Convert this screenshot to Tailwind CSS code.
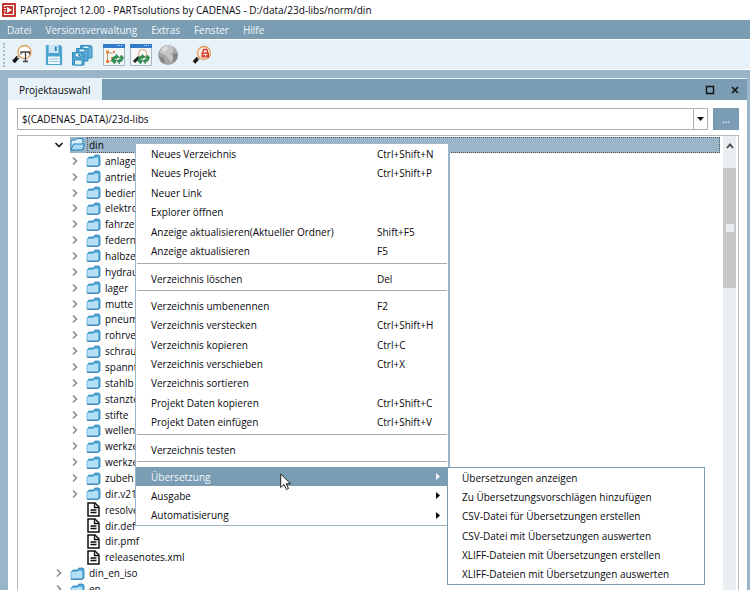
<!DOCTYPE html>
<html lang="de">
 <head>
  <meta charset="utf-8"/>
  <meta content="width=device-width, initial-scale=1" name="viewport"/>
  <title>PARTproject 12.00</title>
  <script src="https://cdn.jsdelivr.net/npm/@tailwindcss/browser@4"></script>
 </head>
 <body class="h-screen flex flex-col overflow-hidden bg-[#9ab5c7] text-[10px] leading-4 text-[#08080f] font-['Open_Sans','Noto_Sans',sans-serif]">

  <!-- shared icons -->
  <svg class="hidden">
   <symbol id="folder" viewBox="0 0 15 14">
    <path d="M1.500 12.500V5L3 3.500H7L9 1.500H13L14 3V11L12.500 12.500Z" fill="#4ea5d3" stroke="#2f86b8" stroke-width=".8"/>
    <path d="M1 5H7L8.500 4H12.500V12.500H1Z" fill="#b5e0f6" stroke="#5fb0db" stroke-width=".8"/>
    <path d="M1 12.700H12.500L14 11" fill="none" stroke="#2878a8"/>
   </symbol>
   <symbol id="folder-open" viewBox="0 0 15 14">
    <path d="M1 12.500V3.500L2 2.500H5.500L7 1H12.500L13 5V11Z" fill="#d9f0fb" stroke="#2580b3"/>
    <path d="M1 12.500L3.500 6.500H14.500L12.500 12.500Z" fill="#a6daf5" stroke="#2580b3"/>
   </symbol>
   <symbol id="file" viewBox="0 0 13 15">
    <path d="M1 1H8L12 5V14H1Z" fill="#fff" stroke="#111" stroke-width="1.500"/>
    <path d="M7.500 1V5.500H12M3.500 8H9.500M3.500 10.500H9.500" fill="none" stroke="#111" stroke-width="1.300"/>
   </symbol>
   <symbol id="closed" viewBox="0 0 10 10">
    <path d="M3 1.500L6.500 5L3 8.500" fill="none" stroke="#8a8a8a" stroke-width="1.500"/>
   </symbol>
   <symbol id="opened" viewBox="0 0 10 10">
    <path d="M1.500 3L5 6.500L8.500 3" fill="none" stroke="#222" stroke-width="1.700"/>
   </symbol>
   <symbol id="refresh" viewBox="0 0 13 10">
    <path d="M1 6C1 3 3 2 5 2V0L8 3L5 5V4C4 4 3.500 5 4 6L6 6L3.500 10L0 6ZM12 4C12 7 10 8 8.500 8V10L6 7L8.500 5V6C9.500 6 10 5 9.500 4H8L10.500 1L13 4Z" fill="#2f9150" stroke="#1d6d39" stroke-width=".4"/>
   </symbol>
  </svg>

  <header class="flex h-5 shrink-0 items-center gap-1 bg-white pl-0.5">
   <svg class="size-[14px]" viewBox="0 0 14 14"><rect width="14" height="14" rx="1" fill="#c5332d"/><path d="M2.500 4V2.500H11.500V11.500H2.500V10" fill="none" stroke="#fff" stroke-width="1.200"/><path d="M5 4L10 7L5 10Z" fill="#fff"/><path d="M2 5.500H4M2 8H4" stroke="#fff"/></svg>
   <h1>PARTproject 12.00 - PARTsolutions by CADENAS - D:/data/23d-libs/norm/din</h1>
  </header>

  <nav class="flex h-5 shrink-0 items-center gap-3.5 border-b border-white bg-[#7b9db4] pl-[7px] text-[#f1f6fa]">
   <button>Datei</button>
   <button>Versionsverwaltung</button>
   <button>Extras</button>
   <button>Fenster</button>
   <button>Hilfe</button>
  </nav>

  <div class="flex h-[30px] shrink-0 items-center border-b border-white bg-[#e6f1f8] pl-[3px]">
   <span class="mr-1 h-6 w-0 border-l-2 border-dotted border-[#a9bdca]"></span>
   <button class="ml-0.5" aria-label="Textsuche"><svg class="h-[22px] w-[22px]" viewBox="0 0 22 22"><path d="M7 13L2.500 18" stroke="#151515" stroke-width="3.500"/><path d="M8.500 12L6.500 14" stroke="#bbb" stroke-width="2"/><circle cx="13.500" cy="8" r="6.500" fill="#fff" stroke="#e39a55" stroke-width="1.300"/><path d="M10 10.500V8H18.500V10.500M14.500 8V17.500M12 17.500H17" fill="none" stroke="#444" stroke-width="1.300"/></svg></button>
   <button class="ml-3" aria-label="Speichern"><svg class="h-[22px] w-[18px]" viewBox="0 0 20 22" preserveAspectRatio="none"><path d="M1 1H17L19 3V21H1Z" fill="#4ba3d0"/><path d="M4 1H15V9H4Z" fill="#c9e7f6"/><path d="M11 2.500H13V7H11Z" fill="#287fae"/><path d="M3.500 12.500H16.500V20H3.500Z" fill="#eef8fd"/><path d="M5 15H15M5 17.500H15" stroke="#8dbfd9"/></svg></button>
   <button class="ml-2" aria-label="Alles speichern"><svg class="h-[22px] w-[22px]" viewBox="0 0 22 22"><g stroke="#318cbb"><path d="M9.500 1.500H20L21 3V14H9.500Z" fill="#67b2d9"/><path d="M12 2H18V5H12Z" fill="#e4f4fb"/><path d="M5.500 4.500H16L17 6V17H5.500Z" fill="#5dacd5"/><path d="M8 5H14V8H8Z" fill="#e4f4fb"/><path d="M1.500 8.500H12L13 10V21H1.500Z" fill="#55a9d4"/><path d="M4 9H10V13H4ZM3.500 16H11V21H3.500Z" fill="#e4f4fb"/></g><path d="M7.500 10H9V12H7.500Z" fill="#287fae"/></svg></button>
   <button class="ml-2.5" aria-label="Struktur aktualisieren"><svg class="h-[22px] w-[22px]" viewBox="0 0 22 22"><path d="M.5 .5H21.500V21.500H.5Z" fill="#f6f7f8" stroke="#a7b7c2"/><path d="M0 0H22V4H0Z" fill="#327bcb"/><path d="M14 1.500H20" stroke="#c7dfef" stroke-dasharray="1 1"/><path d="M4.500 8V18M5 9H10M5 17H9" stroke="#b79b64" fill="none"/><path d="M3 6.500H6V9.500H3ZM3 16H6V19H3ZM8 13H10V15H8ZM10 7H12V9H10Z" fill="#e78343"/><use href="#refresh" x="8" y="10" width="13" height="10"/></svg></button>
   <button class="ml-[5px]" aria-label="Suche aktualisieren"><svg class="h-[22px] w-[22px]" viewBox="0 0 22 22"><path d="M.5 .5H21.500V21.500H.5Z" fill="#f6f7f8" stroke="#a7b7c2"/><path d="M0 0H22V4H0Z" fill="#327bcb"/><path d="M14 1.500H20" stroke="#c7dfef" stroke-dasharray="1 1"/><path d="M9 13L4 18" stroke="#222" stroke-width="3"/><circle cx="12.500" cy="9.500" r="4" fill="#fff" stroke="#d99c67"/><use href="#refresh" x="7" y="10" width="13" height="10"/></svg></button>
   <button class="ml-[5px]" aria-label="Globus"><svg class="h-[22px] w-[22px]" viewBox="0 0 22 22"><circle cx="11" cy="11" r="10" fill="#a5a5a5"/><path d="M4 4L9 1L15 2L17 6L14 10L17 13L14 18L11 14L8 11L3 9Z" fill="#c5c5c5"/><path d="M16 10L21 9L20 15L16 19ZM2 12L7 14L8 20L4 18Z" fill="#858585"/><path d="M5 5L10 2L11 5L7 8Z" fill="#dedede"/></svg></button>
   <button class="ml-3" aria-label="Gesperrte suchen"><svg class="h-[22px] w-[22px]" viewBox="0 0 22 22"><path d="M7 14L3 18.500" stroke="#151515" stroke-width="3.500"/><path d="M9 13L7 15" stroke="#bbb" stroke-width="2"/><circle cx="13" cy="9" r="6.500" fill="#fbeee4" stroke="#e39a55" stroke-width="1.300"/><path d="M12 9V7.500A2 2 0 0 1 16.500 7.500V9" fill="none" stroke="#d53c30" stroke-width="1.300"/><path d="M10.500 8.500H18V13.500H10.500Z" fill="#d53c30"/><path d="M12 10.500H16.500M14.500 10V12.500" stroke="#fbeee4"/></svg></button>
  </div>

  <main class="ml-2 mr-[3px] mt-2 flex min-h-0 flex-1 flex-col border-t border-[#e6f1f8] bg-white">
   <div class="flex h-[21px] shrink-0 items-stretch bg-[#7b9db4]">
    <h2 class="flex items-center bg-[#e6f1f8] px-[11px]">Projektauswahl</h2>
    <button class="ml-auto mr-[15px]" aria-label="Maximieren"><svg class="size-2.5" viewBox="0 0 10 10"><path d="M1.500 1.500H8.500V8.500H1.500Z" fill="none" stroke="#111" stroke-width="1.400"/></svg></button>
    <button class="mr-[7px]" aria-label="Schließen"><svg class="size-2.5" viewBox="0 0 10 10"><path d="M2 2L8 8M8 2L2 8" stroke="#111" stroke-width="1.600"/></svg></button>
   </div>

   <div class="ml-[9px] mr-2 mt-2 flex h-[22px] shrink-0 gap-[5px]">
    <div class="flex flex-1 border border-[#b0b0b0]">
     <input aria-label="Pfad" class="min-w-0 flex-1 pl-1 outline-none" type="text" value="$(CADENAS_DATA)/23d-libs"/>
     <button class="flex w-3.5 items-center justify-center border-l border-[#b0b0b0]" aria-label="Liste öffnen"><svg class="h-1 w-[7px]" viewBox="0 0 7 4"><path d="M0 0H7L3.500 4Z" fill="#111"/></svg></button>
    </div>
    <button class="w-[26px] bg-[#7b9db4] text-white">...</button>
   </div>

   <section class="relative ml-[9px] mr-2 mt-[5px] flex min-h-0 flex-1 border border-b-0 border-[#b8b8b8]">
    <div class="min-w-0 flex-1 overflow-hidden pt-px">
     <ul class="grid h-[460px] auto-rows-fr" id="tree"></ul>
    </div>
    <div class="ml-[3px] mr-0.5 w-[13px] bg-[#e9eff0]">
     <button class="flex h-8 w-full justify-center pt-1.5" aria-label="Nach oben"><svg class="h-2 w-2" viewBox="0 0 8 8"><path d="M1 6L4 2.500L7 6" fill="none" stroke="#444" stroke-width="1.800"/></svg></button>
     <div class="flex h-[120px] items-center justify-center bg-[#c8c8c8]"><span class="size-2 bg-[#e9eff0]"></span></div>
    </div>

    <!-- context menu -->
    <div class="absolute left-[117px] top-[7px] w-[315px] border border-r-2 border-[#9db6c7] bg-white" id="menu"></div>
    <ul class="absolute left-[429px] top-[331px] grid h-[118px] w-[258px] auto-rows-fr items-center border border-[#7b9db4] bg-white pl-3.5">
     <li><button>Übersetzungen anzeigen</button></li>
     <li><button>Zu Übersetzungsvorschlägen hinzufügen</button></li>
     <li><button>CSV-Datei für Übersetzungen erstellen</button></li>
     <li><button>CSV-Datei mit Übersetzungen auswerten</button></li>
     <li><button>XLIFF-Dateien mit Übersetzungen erstellen</button></li>
     <li><button>XLIFF-Dateien mit Übersetzungen auswerten</button></li>
    </ul>
    <svg class="absolute left-[262px] top-[337px] h-[18px] w-3" viewBox="0 0 12 18"><path d="M.7 1V14.500L4 11.500L6.500 16.500L8.500 15.500L6.200 10.700H10.500Z" fill="#fff" stroke="#222"/></svg>
   </section>
  </main>

  <script>
   const folders = [
      "anlage", "antrieb", "bedien", "elektro", "fahrze", "federn", "halbze",
      "hydrau", "lager", "mutte", "pneum", "rohrve", "schrau", "spannt", "stahlb",
      "stanzte", "stifte", "wellen", "werkze", "werkze", "zubeh", "dir.v21",
    ];
    const files = ["resolve", "dir.def", "dir.pmf", "releasenotes.xml"];

    function treeRow(name, indent, icon, arrow) {
      const selected = name === "din";
      return `<li class="flex items-center ${indent}">
        <svg class="mr-1.5 size-2.5 shrink-0">${arrow ? `<use href="#${arrow}"/>` : ""}</svg>
        <div class="flex h-full min-w-0 flex-1 items-center gap-0.5 ${selected ? "bg-[#9ab5c7]" : ""}">
          <svg class="h-[15px] w-[15px] shrink-0"><use href="#${icon}"/></svg>
          <span class="flex h-full items-center pl-px ${selected ? "flex-1 border border-dotted border-[#555]" : "border-l border-transparent"}">${name}</span>
        </div>
      </li>`;
    }

    document.getElementById("tree").innerHTML =
      treeRow("din", "pl-9", "folder-open", "opened") +
      folders.map((f) => treeRow(f, "pl-[52px]", "folder", "closed")).join("") +
      files.map((f) => treeRow(f, "pl-[52px]", "file", "")).join("") +
      treeRow("din_en_iso", "pl-9", "folder", "closed") +
      treeRow("en", "pl-9", "folder", "closed");

    // one entry per block between two separators
    const groups = [
      ["h-[117px]", [
        ["Neues Verzeichnis", "Ctrl+Shift+N"],
        ["Neues Projekt", "Ctrl+Shift+P"],
        ["Neuer Link", ""],
        ["Explorer öffnen", ""],
        ["Anzeige aktualisieren(Aktueller Ordner)", "Shift+F5"],
        ["Anzeige aktualisieren", "F5"],
      ]],
      ["h-[19px]", [["Verzeichnis löschen", "Del"]]],
      ["h-[136px]", [
        ["Verzeichnis umbenennen", "F2"],
        ["Verzeichnis verstecken", "Ctrl+Shift+H"],
        ["Verzeichnis kopieren", "Ctrl+C"],
        ["Verzeichnis verschieben", "Ctrl+X"],
        ["Verzeichnis sortieren", ""],
        ["Projekt Daten kopieren", "Ctrl+Shift+C"],
        ["Projekt Daten einfügen", "Ctrl+Shift+V"],
      ]],
      ["h-[19px]", [["Verzeichnis testen", ""]]],
      ["h-[58px]", [["Übersetzung", ">"], ["Ausgabe", ">"], ["Automatisierung", ">"]]],
    ];

    function menuItem([label, key]) {
      const active = label === "Übersetzung" ? "bg-[#7b9db4] text-[#f1f6fa]" : "";
      const right = key === ">"
        ? `<svg class="ml-auto mr-2 h-[7px] w-1" viewBox="0 0 4 7"><path d="M0 0L4 3.500L0 7Z" fill="currentColor"/></svg>`
        : `<kbd class="w-[71px] font-[inherit] text-[10px]">${key}</kbd>`;
      return `<li class="flex"><button class="flex flex-1 items-center pl-[15px] text-left ${active}">
        <span class="flex-1">${label}</span>${right}</button></li>`;
    }

    document.getElementById("menu").innerHTML = groups
      .map(([height, items]) => `<ul class="grid auto-rows-fr ${height}">${items.map(menuItem).join("")}</ul>`)
      .join(`<div class="h-2 px-px pt-0.5"><hr class="border-[#aaa]"/></div>`);
  </script>
 </body>
</html>
